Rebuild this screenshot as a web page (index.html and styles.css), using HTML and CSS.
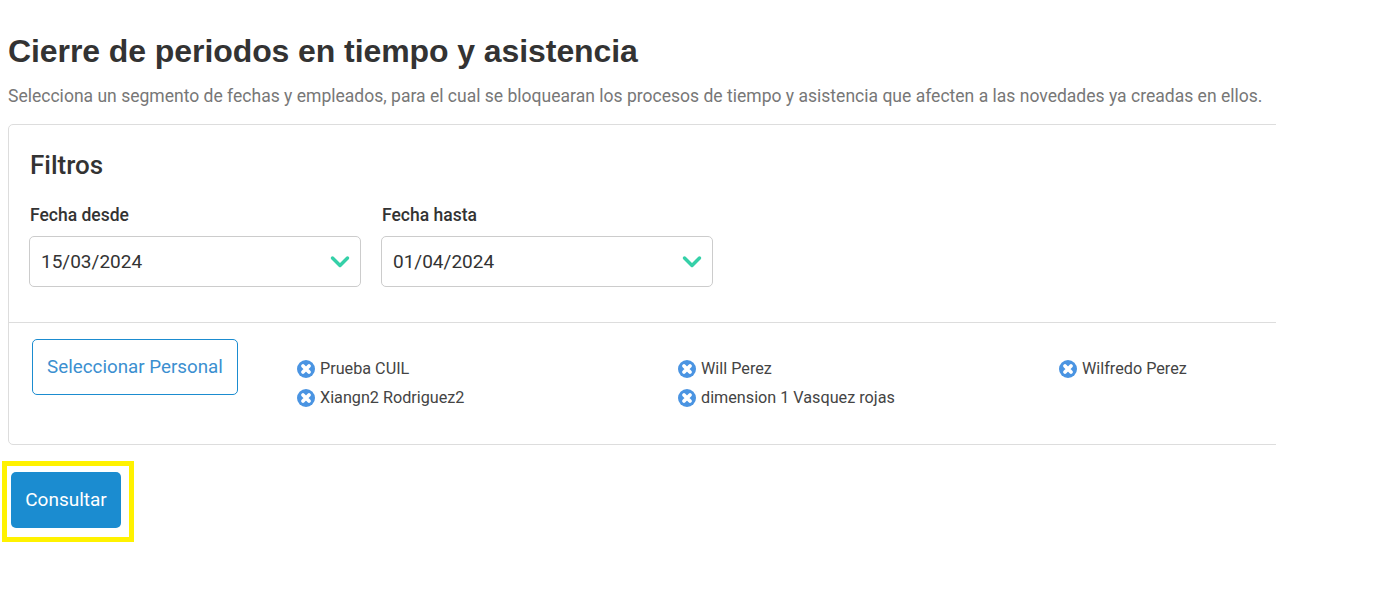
FILE: index.html
```html
<!DOCTYPE html>
<html lang="es">
<head>
    <meta charset="UTF-8">
    <title>Cierre de periodos</title>
    <link rel="stylesheet" href="styles.css">
</head>
<body>
    <main class="page">
        <h1>Cierre de periodos en tiempo y asistencia</h1>
        <p class="subtitle">Selecciona un segmento de fechas y empleados, para el cual se bloquearan los procesos de tiempo y asistencia que afecten a las novedades ya creadas en ellos.</p>

        <section class="card">
            <div class="filters">
                <h2>Filtros</h2>
                <div class="date-row">
                    <div class="field">
                        <label>Fecha desde</label>
                        <div class="date-input">
                            <span>15/03/2024</span>
                            <svg class="chevron" viewBox="0 0 20 14"><path d="M2.5 3 L10 10.5 L17.5 3"/></svg>
                        </div>
                    </div>
                    <div class="field">
                        <label>Fecha hasta</label>
                        <div class="date-input">
                            <span>01/04/2024</span>
                            <svg class="chevron" viewBox="0 0 20 14"><path d="M2.5 3 L10 10.5 L17.5 3"/></svg>
                        </div>
                    </div>
                </div>
            </div>
            <div class="people">
                <button class="select-btn">Seleccionar Personal</button>
                <ul class="chips">
                    <li><svg class="remove" viewBox="0 0 18 18"><circle cx="9" cy="9" r="9"/><path d="M6 6 L12 12 M12 6 L6 12"/></svg>Prueba CUIL</li>
                    <li><svg class="remove" viewBox="0 0 18 18"><circle cx="9" cy="9" r="9"/><path d="M6 6 L12 12 M12 6 L6 12"/></svg>Will Perez</li>
                    <li><svg class="remove" viewBox="0 0 18 18"><circle cx="9" cy="9" r="9"/><path d="M6 6 L12 12 M12 6 L6 12"/></svg>Wilfredo Perez</li>
                    <li><svg class="remove" viewBox="0 0 18 18"><circle cx="9" cy="9" r="9"/><path d="M6 6 L12 12 M12 6 L6 12"/></svg>Xiangn2 Rodriguez2</li>
                    <li><svg class="remove" viewBox="0 0 18 18"><circle cx="9" cy="9" r="9"/><path d="M6 6 L12 12 M12 6 L6 12"/></svg>dimension 1 Vasquez rojas</li>
                </ul>
            </div>
        </section>

        <div class="actions">
            <button class="submit-btn">Consultar</button>
            <div class="highlight"></div>
        </div>
    </main>
</body>
</html>
```

FILE: styles.css
```css
/* General Styles */
body {
    font-family: 'Roboto', sans-serif;
    margin: 0;
    padding: 0;
    background: #fff;
    color: #333;
}

.page {
    width: 1276px;
    padding: 32px 0 0 8px;
    box-sizing: border-box;
    overflow: hidden;
}

h1 {
    font-family: 'Liberation Sans', sans-serif;
    font-size: 32px;
    line-height: 38px;
    font-weight: 700;
    letter-spacing: -0.08px;
    color: #333;
    margin: 0;
}

.subtitle {
    font-size: 17.55px;
    line-height: 26px;
    color: #777;
    margin: 13px 0 0;
    white-space: nowrap;
}

/* Card, runs past the right edge of the page */
.card {
    width: 1400px;
    height: 321px;
    box-sizing: border-box;
    margin-top: 15px;
    border: 1px solid #ddd;
    border-radius: 5px;
}

.filters {
    height: 198px;
    box-sizing: border-box;
    padding: 26px 20px 0;
    border-bottom: 1px solid #ddd;
}

h2 {
    font-size: 26px;
    line-height: 28px;
    font-weight: 500;
    margin: 0 0 0 1px;
}

.date-row {
    display: flex;
    gap: 20px;
    margin-top: 25px;
}

.field label {
    display: block;
    font-size: 17.5px;
    line-height: 22px;
    font-weight: 500;
    margin: 0 0 10px 1px;
}

.date-input {
    width: 332px;
    height: 51px;
    box-sizing: border-box;
    display: flex;
    align-items: center;
    justify-content: space-between;
    padding: 0 10px 0 11px;
    border: 1px solid #ccc;
    border-radius: 5px;
    font-size: 19px;
}

.chevron {
    width: 20px;
    height: 14px;
}

.chevron path {
    fill: none;
    stroke: #35d0a8;
    stroke-width: 3.5;
    stroke-linecap: round;
    stroke-linejoin: round;
}

.people {
    display: flex;
    align-items: flex-start;
    padding: 16px 0 0 23px;
}

.select-btn {
    flex: none;
    width: 206px;
    height: 56px;
    font-family: inherit;
    font-size: 18.8px;
    color: #3b8fd0;
    background: #fff;
    border: 1px solid #1b8cd0;
    border-radius: 5px;
    padding: 0;
    white-space: nowrap;
}

.chips {
    list-style: none;
    margin: 15px 0 0 59px;
    padding: 0;
    display: grid;
    grid-template-columns: repeat(3, 381px);
    grid-auto-rows: 29px;
}

.chips li {
    display: flex;
    align-items: center;
    gap: 5px;
    font-size: 16.2px;
    color: #444;
}

.remove {
    width: 18px;
    height: 18px;
    flex: none;
}

.remove circle {
    fill: #4a94e2;
}

.remove path {
    stroke: #fff;
    stroke-width: 3.8;
    stroke-linecap: round;
}

.actions {
    position: relative;
    margin: 27px 0 0 3px;
    padding-bottom: 20px;
}

.submit-btn {
    display: block;
    width: 110px;
    height: 56px;
    font-family: inherit;
    font-size: 19px;
    color: #fff;
    background: #1b8cd0;
    border: none;
    border-radius: 5px;
    padding: 0 0 2px;
}

/* Yellow frame drawn over the button */
.highlight {
    position: absolute;
    left: -9px;
    top: -11px;
    width: 122px;
    height: 71px;
    border: 5px solid #fff200;
}
```
